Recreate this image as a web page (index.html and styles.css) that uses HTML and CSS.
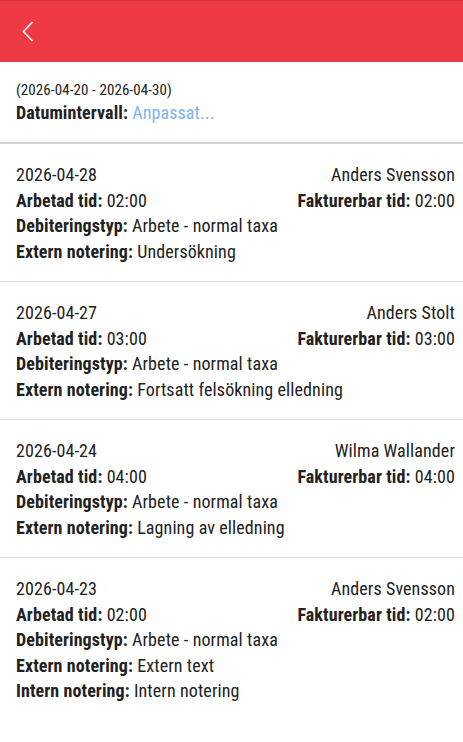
FILE: index.html
```html
<!DOCTYPE html>
<html lang="sv">
<head>
<meta charset="utf-8">
<title>Tidrapporter</title>
<link rel="stylesheet" href="styles.css">
</head>
<body>
<header class="topbar">
  <button class="back" aria-label="Tillbaka">
    <svg width="12" height="21" viewBox="0 0 12 21"><path d="M10.5 1 L1.5 10.5 L10.5 20" fill="none" stroke="#fff" stroke-width="1.6"/></svg>
  </button>
</header>
<section class="filter">
  <div class="range">(2026-04-20 - 2026-04-30)</div>
  <div class="line"><b>Datumintervall:</b> <span class="link">Anpassat...</span></div>
</section>
<main class="list">
  <article class="entry">
    <div class="row"><span>2026-04-28</span><span>Anders Svensson</span></div>
    <div class="row"><span><b>Arbetad tid:</b> 02:00</span><span><b>Fakturerbar tid:</b> 02:00</span></div>
    <div class="line"><b>Debiteringstyp:</b> Arbete - normal taxa</div>
    <div class="line"><b>Extern notering:</b> Undersökning</div>
  </article>
  <article class="entry">
    <div class="row"><span>2026-04-27</span><span>Anders Stolt</span></div>
    <div class="row"><span><b>Arbetad tid:</b> 03:00</span><span><b>Fakturerbar tid:</b> 03:00</span></div>
    <div class="line"><b>Debiteringstyp:</b> Arbete - normal taxa</div>
    <div class="line"><b>Extern notering:</b> Fortsatt felsökning elledning</div>
  </article>
  <article class="entry">
    <div class="row"><span>2026-04-24</span><span>Wilma Wallander</span></div>
    <div class="row"><span><b>Arbetad tid:</b> 04:00</span><span><b>Fakturerbar tid:</b> 04:00</span></div>
    <div class="line"><b>Debiteringstyp:</b> Arbete - normal taxa</div>
    <div class="line"><b>Extern notering:</b> Lagning av elledning</div>
  </article>
  <article class="entry last">
    <div class="row"><span>2026-04-23</span><span>Anders Svensson</span></div>
    <div class="row"><span><b>Arbetad tid:</b> 02:00</span><span><b>Fakturerbar tid:</b> 02:00</span></div>
    <div class="line"><b>Debiteringstyp:</b> Arbete - normal taxa</div>
    <div class="line"><b>Extern notering:</b> Extern text</div>
    <div class="line"><b>Intern notering:</b> Intern notering</div>
  </article>
</main>
</body>
</html>
```

FILE: styles.css
```css
* { box-sizing: border-box; }
html, body { margin: 0; padding: 0; background: #fff; }
body {
  font-family: "Roboto Condensed", Roboto, "Liberation Sans", sans-serif;
  color: #212121;
  font-size: 18px;
  letter-spacing: 0.1px;
}
b { font-weight: 700; }
.topbar {
  height: 62px;
  background: #ef3a45;
  border-top: 1px solid #d0303a;
  display: flex;
  align-items: center;
  padding-left: 22px;
}
.back {
  background: none;
  border: 0;
  padding: 0;
  display: flex;
  cursor: pointer;
}
.filter {
  padding: 18px 8px 16px 16px;
  border-bottom: 2px solid #d4d4d4;
}
.filter .range { font-size: 15px; line-height: 20px; }
.filter .line { line-height: 26px; font-size: 18px; }
.link { color: #80b3f2; }
.entry {
  padding: 18px 8px 17px 16px;
  border-bottom: 1px solid #e2e2e2;
}
.entry.last { border-bottom: 0; }
.row {
  display: flex;
  justify-content: space-between;
  line-height: 25.5px;
}
.line { line-height: 25.5px; }
```
